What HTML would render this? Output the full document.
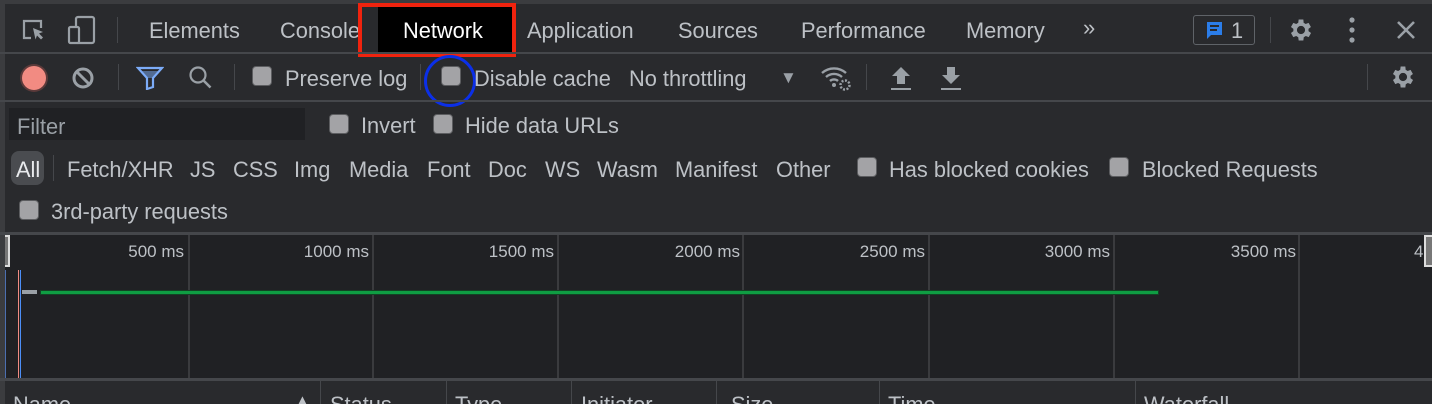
<!DOCTYPE html>
<html><head><meta charset="utf-8"><style>
*{margin:0;padding:0;box-sizing:border-box}
html,body{width:1432px;height:404px;overflow:hidden}
body{background:#292a2d;font-family:"Liberation Sans",sans-serif;color:#bdc1c6;position:relative}
.a{position:absolute;white-space:nowrap}
.t{font-size:21.8px;line-height:24px}
.cb{position:absolute;width:20px;height:20px;border-radius:4px;background:#a3a3a6;border:1px solid #5c5d60}
.hl{position:absolute;left:0;width:1432px;height:2px;background:#45474b}
.vl{position:absolute;width:1px;background:#45474b}
.gl{position:absolute;top:235px;width:2px;height:143px;background:#3a3b3e}
.ms{position:absolute;top:241px;font-size:17px;line-height:22px;color:#bdc1c6;text-align:right;width:120px}
</style></head><body>
<div class="a" style="left:0;top:0;width:1432px;height:4px;background:#3b3c3f"></div>
<div class="a" style="left:0;top:4px;width:5px;height:400px;background:#3b3c3f"></div>
<svg class="a" style="left:20px;top:17px" width="30" height="28" viewBox="0 0 30 28"><path d="M11 21H4V4h17v7" fill="none" stroke="#9aa0a6" stroke-width="2.2"/><path d="M13 11l10 4-4 1.5 4 4-2 2-4-4-1.5 4z" fill="#9aa0a6"/></svg>
<svg class="a" style="left:66px;top:15px" width="32" height="30" viewBox="0 0 32 30"><rect x="10" y="2" width="18" height="26" rx="2" fill="none" stroke="#9aa0a6" stroke-width="2.2"/><rect x="3" y="12" width="10" height="16" rx="1.5" fill="#292a2d" stroke="#9aa0a6" stroke-width="2.2"/></svg>
<div class="vl" style="left:117px;top:17px;height:26px"></div>
<div class="a t" style="left:149px;top:19px">Elements</div>
<div class="a t" style="left:280px;top:19px">Console</div>
<div class="a" style="left:358px;top:3px;width:158px;height:54px;border:4px solid #f0230e;background:#000"></div>
<div class="a" style="left:362px;top:7px;width:16px;height:46px;background:#292a2d"></div>
<div class="a t" style="left:403px;top:19px;color:#fff">Network</div>
<div class="a t" style="left:527px;top:19px">Application</div>
<div class="a t" style="left:678px;top:19px">Sources</div>
<div class="a t" style="left:801px;top:19px">Performance</div>
<div class="a t" style="left:966px;top:19px">Memory</div>
<div class="a t" style="left:1083px;top:16px;font-size:22px">»</div>
<div class="a" style="left:1193px;top:15px;width:62px;height:30px;border:1.5px solid #5f6368;border-radius:3px"></div>
<svg class="a" style="left:1205px;top:20px" width="20" height="22" viewBox="0 0 20 22"><path d="M2 2h15v13H6l-4 4z" fill="#2b7de9"/><path d="M5 6h9M5 10h7" stroke="#292a2d" stroke-width="2"/></svg>
<div class="a t" style="left:1231px;top:19px">1</div>
<div class="vl" style="left:1270px;top:17px;height:26px"></div>
<svg class="a" style="left:1287px;top:16px" width="28" height="28" viewBox="0 0 24 24"><path fill="#9aa0a6" d="M19.4 13a7.5 7.5 0 000-2l2.1-1.6-2-3.5-2.5 1a7 7 0 00-1.7-1L15 3h-4l-.4 2.9a7 7 0 00-1.7 1l-2.5-1-2 3.5L6.5 11a7.5 7.5 0 000 2l-2.1 1.6 2 3.5 2.5-1a7 7 0 001.7 1L11 21h4l.4-2.9a7 7 0 001.7-1l2.5 1 2-3.5zM13 15.5a3.5 3.5 0 110-7 3.5 3.5 0 010 7z" transform="translate(-1 0)"/></svg>
<svg class="a" style="left:1345px;top:15px" width="14" height="30"><circle cx="7" cy="5" r="2.6" fill="#9aa0a6"/><circle cx="7" cy="15" r="2.6" fill="#9aa0a6"/><circle cx="7" cy="25" r="2.6" fill="#9aa0a6"/></svg>
<svg class="a" style="left:1395px;top:19px" width="22" height="22"><path d="M3 3l16 16M19 3L3 19" stroke="#9aa0a6" stroke-width="2.6"/></svg>
<div class="hl" style="top:52px"></div>
<div class="a" style="left:22px;top:66px;width:24px;height:24px;border-radius:50%;background:#f28b82;box-shadow:0 0 0 2px #5c3a3a"></div>
<svg class="a" style="left:71px;top:66px" width="24" height="24"><circle cx="12" cy="12" r="9" fill="none" stroke="#9aa0a6" stroke-width="3"/><path d="M6 6l12 12" stroke="#9aa0a6" stroke-width="3"/></svg>
<div class="vl" style="left:118px;top:64px;height:26px"></div>
<svg class="a" style="left:136px;top:66px" width="28" height="24"><path d="M2 2h24l-9 10v9l-6 2V12z" fill="none" stroke="#7cacf8" stroke-width="2.2"/><path d="M6 5h16l-6 7h-4z" fill="#7cacf8" opacity=".5"/></svg>
<svg class="a" style="left:187px;top:64px" width="28" height="28"><circle cx="11" cy="11" r="7.5" fill="none" stroke="#9aa0a6" stroke-width="2.2"/><path d="M16.5 16.5l7 7" stroke="#9aa0a6" stroke-width="2.6"/></svg>
<div class="vl" style="left:234px;top:64px;height:26px"></div>
<div class="cb" style="left:252px;top:66px"></div>
<div class="a t" style="left:285px;top:67px">Preserve log</div>
<div class="vl" style="left:420px;top:64px;height:26px"></div>
<div class="cb" style="left:441px;top:66px"></div>
<div class="a" style="left:424px;top:55px;width:52px;height:52px;border:3.5px solid #0b2fe8;border-radius:50%"></div>
<div class="a t" style="left:474px;top:67px">Disable cache</div>
<div class="a t" style="left:629px;top:67px">No throttling</div>
<div class="a" style="left:780px;top:68px;font-size:17px;color:#9aa0a6">▼</div>
<svg class="a" style="left:819px;top:64px" width="34" height="28" viewBox="0 0 34 28"><path d="M3 9a18 18 0 0124 0M7 13a12 12 0 0116 0M11 17a6 6 0 018 0" fill="none" stroke="#9aa0a6" stroke-width="2.4"/><circle cx="15" cy="21" r="2" fill="#9aa0a6"/><circle cx="26" cy="21" r="4.5" fill="none" stroke="#9aa0a6" stroke-width="2.5" stroke-dasharray="2 1.5"/></svg>
<div class="vl" style="left:866px;top:64px;height:26px"></div>
<svg class="a" style="left:889px;top:64px" width="24" height="28"><path d="M12 3l9 9h-5v8H8v-8H3z" fill="#9aa0a6"/><path d="M2 25h20" stroke="#9aa0a6" stroke-width="2"/></svg>
<svg class="a" style="left:939px;top:64px" width="24" height="28"><path d="M8 3h8v8h5l-9 9-9-9h5z" fill="#9aa0a6"/><path d="M2 25h20" stroke="#9aa0a6" stroke-width="2"/></svg>
<div class="vl" style="left:1367px;top:64px;height:26px"></div>
<svg class="a" style="left:1389px;top:63px" width="28" height="28" viewBox="0 0 24 24"><path fill="#9aa0a6" d="M19.4 13a7.5 7.5 0 000-2l2.1-1.6-2-3.5-2.5 1a7 7 0 00-1.7-1L15 3h-4l-.4 2.9a7 7 0 00-1.7 1l-2.5-1-2 3.5L6.5 11a7.5 7.5 0 000 2l-2.1 1.6 2 3.5 2.5-1a7 7 0 001.7 1L11 21h4l.4-2.9a7 7 0 001.7-1l2.5 1 2-3.5zM13 15.5a3.5 3.5 0 110-7 3.5 3.5 0 010 7z" transform="translate(-1 0)"/></svg>
<div class="hl" style="top:100px"></div>
<div class="a" style="left:9px;top:108px;width:296px;height:32px;background:#202124"></div>
<div class="a t" style="left:17px;top:115px;color:#9aa0a6">Filter</div>
<div class="cb" style="left:329px;top:114px"></div>
<div class="a t" style="left:361px;top:114px">Invert</div>
<div class="cb" style="left:433px;top:114px"></div>
<div class="a t" style="left:465px;top:114px">Hide data URLs</div>
<div class="a" style="left:11px;top:151px;width:33px;height:34px;border-radius:8px;background:#4a4c50"></div>
<div class="a t" style="left:16px;top:158px;color:#e8eaed">All</div>
<div class="vl" style="left:53px;top:155px;height:26px"></div>
<div class="a t" style="left:67px;top:158px">Fetch/XHR</div>
<div class="a t" style="left:190px;top:158px">JS</div>
<div class="a t" style="left:233px;top:158px">CSS</div>
<div class="a t" style="left:294px;top:158px">Img</div>
<div class="a t" style="left:349px;top:158px">Media</div>
<div class="a t" style="left:427px;top:158px">Font</div>
<div class="a t" style="left:488px;top:158px">Doc</div>
<div class="a t" style="left:545px;top:158px">WS</div>
<div class="a t" style="left:597px;top:158px">Wasm</div>
<div class="a t" style="left:675px;top:158px">Manifest</div>
<div class="a t" style="left:776px;top:158px">Other</div>
<div class="cb" style="left:857px;top:157px"></div>
<div class="a t" style="left:889px;top:158px">Has blocked cookies</div>
<div class="cb" style="left:1109px;top:157px"></div>
<div class="a t" style="left:1142px;top:158px">Blocked Requests</div>
<div class="cb" style="left:19px;top:200px"></div>
<div class="a t" style="left:51px;top:200px">3rd-party requests</div>
<div class="hl" style="top:232px;height:3px"></div>
<div class="a" style="left:5px;top:235px;width:1427px;height:143px;background:#202124"></div>
<div class="gl" style="left:188px"></div><div class="gl" style="left:372px"></div><div class="gl" style="left:557px"></div><div class="gl" style="left:742px"></div><div class="gl" style="left:928px"></div><div class="gl" style="left:1113px"></div><div class="gl" style="left:1298px"></div>
<div class="ms" style="left:64px">500 ms</div>
<div class="ms" style="left:249px">1000 ms</div>
<div class="ms" style="left:434px">1500 ms</div>
<div class="ms" style="left:620px">2000 ms</div>
<div class="ms" style="left:805px">2500 ms</div>
<div class="ms" style="left:990px">3000 ms</div>
<div class="ms" style="left:1176px">3500 ms</div>
<div class="a" style="left:1414px;top:241px;font-size:17px;line-height:22px">4</div>
<div class="a" style="left:5px;top:235px;width:5px;height:32px;border:2px solid #ddd;border-left:none;background:#777"></div>
<div class="a" style="left:1424px;top:235px;width:8px;height:32px;border:2px solid #ddd;border-right:none;background:#777"></div>
<div class="a" style="left:18px;top:270px;width:1px;height:108px;background:#f28b82"></div>
<div class="a" style="left:20px;top:270px;width:1px;height:108px;background:#4c8ef7"></div>
<div class="a" style="left:5px;top:270px;width:1px;height:108px;background:#4c6fb0"></div>
<div class="a" style="left:22px;top:290px;width:15px;height:4px;background:#9aa0a6"></div>
<div class="a" style="left:40px;top:290px;width:1119px;height:5px;background:#0f9d43;border:1px solid #134225"></div>
<div class="hl" style="top:378px;height:3px"></div>
<div class="vl" style="left:320px;top:381px;height:23px"></div>
<div class="vl" style="left:446px;top:381px;height:23px"></div>
<div class="vl" style="left:571px;top:381px;height:23px"></div>
<div class="vl" style="left:716px;top:381px;height:23px"></div>
<div class="vl" style="left:879px;top:381px;height:23px"></div>
<div class="vl" style="left:1135px;top:381px;height:23px"></div>
<div class="a t" style="left:13px;top:393px">Name</div>
<div class="a" style="left:296px;top:392px;font-size:13px">▲</div>
<div class="a t" style="left:330px;top:393px">Status</div>
<div class="a t" style="left:455px;top:393px">Type</div>
<div class="a t" style="left:581px;top:393px">Initiator</div>
<div class="a t" style="left:731px;top:393px">Size</div>
<div class="a t" style="left:888px;top:393px">Time</div>
<div class="a t" style="left:1144px;top:393px">Waterfall</div>
</body></html>
